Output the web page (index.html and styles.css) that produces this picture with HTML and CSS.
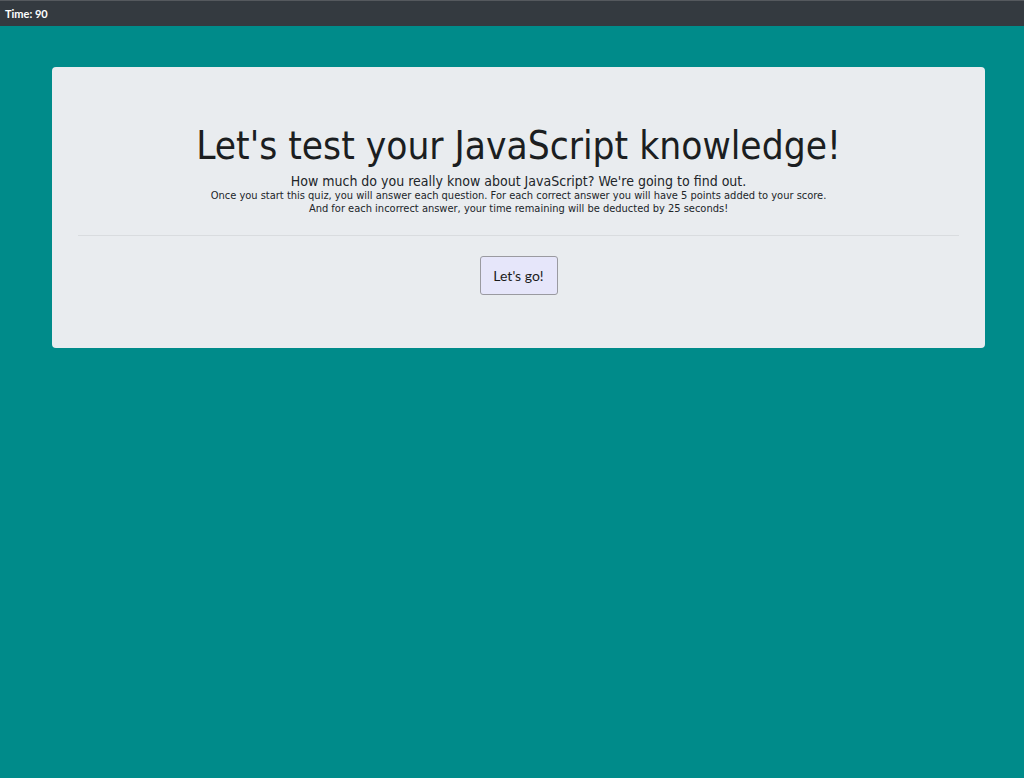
FILE: index.html
```html
<!DOCTYPE html>
<html lang="en">
<head>
<meta charset="utf-8">
<title>JavaScript Quiz</title>
<link rel="stylesheet" href="styles.css">
</head>
<body>
<header class="topbar"><span class="timer">Time: 90</span></header>
<main class="page">
  <section class="jumbo">
    <h1 class="title">Let's test your JavaScript knowledge!</h1>
    <p class="lead">How much do you really know about JavaScript? We're going to find out.</p>
    <p class="info">Once you start this quiz, you will answer each question. For each correct answer you will have 5 points added to your score.</p>
    <p class="info">And for each incorrect answer, your time remaining will be deducted by 25 seconds!</p>
    <hr class="rule">
    <div class="actions"><button class="go">Let's go!</button></div>
  </section>
</main>
</body>
</html>
```
FILE: styles.css
```css
* { box-sizing: border-box; }
html, body { margin: 0; padding: 0; }
body {
  background: #008b8a;
  min-height: 778px;
  font-family: "DejaVu Sans Condensed", "DejaVu Sans", sans-serif;
  color: #212529;
}
.topbar {
  height: 26px;
  background: #343a40;
  border-top: 1px solid #55595e;
  display: flex;
  align-items: center;
  padding-left: 5px;
}
.timer {
  font-family: Lato, sans-serif;
  font-weight: 700;
  font-size: 11px;
  color: #fff;
}
.page {
  padding: 41px 39px 0 52px;
}
.jumbo {
  background: #e9ecef;
  border-radius: 4px;
  padding: 55px 26px 53px;
  text-align: center;
}
.title {
  margin: 0;
  font-weight: 400;
  font-size: 38.5px;
  line-height: 48px;
  color: #1b1e21;
}
.lead {
  margin: 3px 0 0;
  font-size: 14px;
  line-height: 16px;
}
.info {
  margin: 0;
  font-size: 11px;
  line-height: 13px;
}
.rule {
  margin: 20px 0 0;
  border: 0;
  border-top: 1px solid #d9dcdf;
}
.actions {
  display: flex;
  justify-content: center;
  padding-top: 20px;
}
.go {
  width: 78px;
  height: 39px;
  background: #e6e6fa;
  border: 1px solid #9a9aa0;
  border-radius: 3px;
  font-family: Lato, sans-serif;
  font-size: 14px;
  color: #1b1b1b;
  padding: 0;
}
```
